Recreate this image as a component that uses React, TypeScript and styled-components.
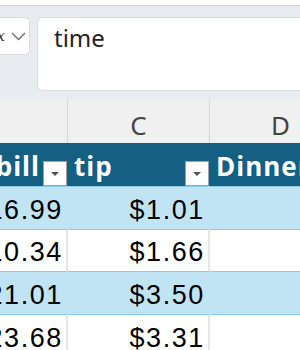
import React from "react";
import styled, { createGlobalStyle } from "styled-components";

const Global = createGlobalStyle`
  html, body { margin: 0; padding: 0; background: #ffffff; }
  body { width: 300px; height: 350px; overflow: hidden; }
  * { box-sizing: border-box; }
`;

const Page = styled.div`
  width: 300px;
  height: 350px;
  overflow: hidden;
  display: flex;
  flex-direction: column;
  background: #ffffff;
`;

const RibbonEdge = styled.div`
  height: 6px;
  flex: none;
  background: #ffffff;
  border-bottom: 1px solid #cdd0d4;
`;

const FormulaBar = styled.div`
  flex: none;
  display: flex;
  align-items: flex-start;
  gap: 7px;
  padding: 11px 0 8px;
  background: #e8ebef;
`;

const FxBox = styled.div`
  flex: none;
  width: 56px;
  margin-left: -26px;
  height: 38px;
  background: #ffffff;
  border: 1px solid #d9dce0;
  border-radius: 5px;
  display: flex;
  align-items: center;
  justify-content: flex-end;
  gap: 6px;
  padding-right: 3px;
`;

const FxLabel = styled.span`
  font-family: "DejaVu Serif", serif;
  font-style: italic;
  font-size: 15px;
  color: #333333;
  line-height: 1;
`;

const FormulaInput = styled.div`
  flex: 1;
  height: 74px;
  background: #ffffff;
  border: 1px solid #d9dce0;
  border-right: none;
  border-radius: 6px 0 0 6px;
  padding: 4px 16px 0;
  font-family: "Noto Sans", "Open Sans", sans-serif;
  font-size: 24px;
  line-height: 32px;
  color: #222222;
`;

const Viewport = styled.div`
  flex: 1;
  overflow: hidden;
`;

const Sheet = styled.div`
  width: 434px;
  margin-left: -82px;
  display: flex;
  flex-direction: column;
`;

const Row = styled.div<{ $h: number }>`
  display: grid;
  grid-template-columns: 150px 142px 142px;
  height: ${(p) => p.$h}px;
`;

const ColLetter = styled.div`
  display: flex;
  align-items: flex-end;
  justify-content: center;
  padding-bottom: 5px;
  background: #f0f0f0;
  border-right: 1px solid #d8d8d8;
  font-family: "Noto Sans", "Open Sans", sans-serif;
  font-size: 26px;
  line-height: 26px;
  color: #444444;
`;

const HeadCell = styled.div`
  display: flex;
  align-items: flex-end;
  gap: 3px;
  padding-left: 6px;
  padding-right: 1px;
  background: #156082;
  overflow: hidden;
`;

const HeadLabel = styled.span<{ $clipStart?: boolean }>`
  flex: 1;
  min-width: 0;
  display: flex;
  justify-content: ${(p) => (p.$clipStart ? "flex-end" : "flex-start")};
  overflow: hidden;
  white-space: nowrap;
  padding-bottom: 5px;
  font-family: "Open Sans", "Noto Sans", sans-serif;
  font-weight: 700;
  font-size: 26px;
  line-height: 30px;
  letter-spacing: 1px;
  color: #ffffff;
`;

const FilterButton = styled.div`
  flex: none;
  width: 24px;
  height: 25px;
  background: #ffffff;
  border: 1px solid #a0a0a0;
  display: flex;
  align-items: center;
  justify-content: center;
`;

const Arrow = styled.div`
  width: 0;
  height: 0;
  border-left: 4px solid transparent;
  border-right: 4px solid transparent;
  border-top: 4px solid #555555;
`;

const DataCell = styled.div<{ $band: boolean }>`
  display: flex;
  align-items: flex-end;
  justify-content: flex-end;
  padding: 0 3px 5px 0;
  background: ${(p) => (p.$band ? "#c1e4f5" : "#ffffff")};
  border-top: 1px solid #8ccbee;
  border-right: 2px solid ${(p) => (p.$band ? "#c1e4f5" : "#e6e6e6")};
  font-family: "Liberation Sans", Arial, sans-serif;
  font-size: 27px;
  line-height: 27px;
  letter-spacing: 1.6px;
  color: #000000;
  white-space: nowrap;
`;

const Chevron = () => (
  <svg width="15" height="9" viewBox="0 0 15 9">
    <polyline points="1,1 7.5,7.5 14,1" fill="none" stroke="#6b6b6b" strokeWidth="1.3" />
  </svg>
);

const rows: [string, string][] = [
  ["16.99", "$1.01"],
  ["10.34", "$1.66"],
  ["21.01", "$3.50"],
  ["23.68", "$3.31"],
];

const heads = ["total_bill", "tip", "Dinner"];

export default function App() {
  return (
    <Page>
      <Global />
      <RibbonEdge />
      <FormulaBar>
        <FxBox>
          <FxLabel>fx</FxLabel>
          <Chevron />
        </FxBox>
        <FormulaInput>time</FormulaInput>
      </FormulaBar>
      <Viewport>
        <Sheet>
          <Row $h={44}>
            {["B", "C", "D"].map((l) => (
              <ColLetter key={l}>{l}</ColLetter>
            ))}
          </Row>
          <Row $h={43}>
            {heads.map((h, i) => (
              <HeadCell key={h}>
                <HeadLabel $clipStart={i === 0}>{h}</HeadLabel>
                <FilterButton>
                  <Arrow />
                </FilterButton>
              </HeadCell>
            ))}
          </Row>
          {rows.map(([a, b], i) => (
            <Row $h={i === 1 ? 42 : 43} key={a}>
              <DataCell $band={i % 2 === 0}>{a}</DataCell>
              <DataCell $band={i % 2 === 0}>{b}</DataCell>
              <DataCell $band={i % 2 === 0} />
            </Row>
          ))}
        </Sheet>
      </Viewport>
    </Page>
  );
}
